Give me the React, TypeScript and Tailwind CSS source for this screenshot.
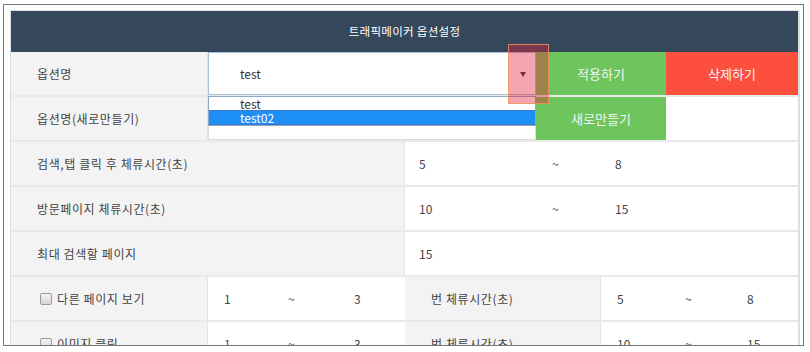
import { ReactNode } from 'react';

const FONT = { fontFamily: '"Noto Sans CJK KR", "Liberation Sans", sans-serif' };

// 범위 값 (5 ~ 8 같은)
const Range = ({ from, to, a, b }: { from: string; to: string; a: string; b: string }) => (
  <div className="flex items-center h-full text-[12px] text-[#444]">
    <span className={a}>{from}</span>
    <span className={b}>~</span>
    <span>{to}</span>
  </div>
);

const Row = ({ children }: { children: ReactNode }) => (
  <div className="flex h-[45px] border-b-2 border-[#e9e9e9] shrink-0">{children}</div>
);

const Label = ({ children, w }: { children: ReactNode; w: string }) => (
  <div className={`${w} h-full bg-[#f3f3f3] border-r border-[#e4e4e4] flex items-center pl-[26px] text-[12px] text-[#444] tracking-[0.6px]`}>
    {children}
  </div>
);

const CheckBox = () => (
  <span className="inline-block w-[12px] h-[12px] rounded-[2px] border border-[#9a9a9a] bg-gradient-to-b from-[#f4f4f4] to-[#d6d6d6] mr-[5px]" />
);

export default function App() {
  return (
    <div className="w-[810px] h-[352px] bg-white relative overflow-hidden" style={FONT}>
      <div className="ml-[3px] mt-[4px] w-[801px] h-[342px] border border-[#777] pl-[6px] pr-[3px] pt-[5px] overflow-hidden bg-white">
        <div className="border-l border-r-2 border-t border-[#dedede] bg-white">
          {/* 헤더 */}
          <div className="h-[41px] bg-[#35485b] flex items-center justify-center text-white text-[11.5px] tracking-[0.3px]">
            트래픽메이커 옵션설정
          </div>

          {/* 옵션명 */}
          <Row>
            <Label w="w-[197px]">옵션명</Label>
            <div className="w-[328px] h-full border border-[#a9bfd8] bg-white flex items-center justify-between pl-[31px] pr-[9px] text-[12px] text-[#333]">
              <span>test</span>
              <span className="text-[6px] text-[#333]">▼</span>
            </div>
            <button className="w-[130px] h-full bg-[#6ec55e] text-[#f4f4f4] text-[13px]">적용하기</button>
            <button className="w-[132px] h-full bg-[#fc4f3e] text-[#f4f4f4] text-[13px]">삭제하기</button>
          </Row>

          {/* 옵션명(새로만들기) */}
          <Row>
            <Label w="w-[197px]">옵션명(새로만들기)</Label>
            <div className="w-[328px] h-full border border-[#dcdcdc] bg-white relative">
              {/* 셀렉트 펼침 목록 */}
              <div className="absolute left-[-1px] right-[-1px] top-[-2px] h-[30px] border border-[#8ea7c4] bg-white text-[12px] leading-[12px]">
                <div className="pl-[31px] h-[13px] flex items-center text-[#333]">test</div>
                <div className="pl-[31px] h-[15px] flex items-center bg-[#1e8ff6] border-y border-[#3a76c9] text-white">test02</div>
              </div>
            </div>
            <button className="w-[130px] h-full bg-[#6ec55e] text-[#f4f4f4] text-[13px]">새로만들기</button>
            <div className="w-[132px] h-full bg-white" />
          </Row>

          <Row>
            <Label w="w-[394px]">검색,탭 클릭 후 체류시간(초)</Label>
            <div className="flex-1 pl-[14px]">
              <Range from="5" to="8" a="w-[133px]" b="w-[63px]" />
            </div>
          </Row>

          <Row>
            <Label w="w-[394px]">방문페이지 체류시간(초)</Label>
            <div className="flex-1 pl-[14px]">
              <Range from="10" to="15" a="w-[133px]" b="w-[63px]" />
            </div>
          </Row>

          <Row>
            <Label w="w-[394px]">최대 검색할 페이지</Label>
            <div className="flex-1 pl-[14px] flex items-center text-[12px] text-[#444]">15</div>
          </Row>

          <Row>
            <div className="w-[197px] h-full bg-[#f3f3f3] border-r border-[#e4e4e4] flex items-center pl-[29px] text-[12px] text-[#444] tracking-[0.6px]">
              <CheckBox />
              다른 페이지 보기
            </div>
            <div className="w-[197px] h-full pl-[16px]">
              <Range from="1" to="3" a="w-[64px]" b="w-[66px]" />
            </div>
            <Label w="w-[196px]">번 체류시간(초)</Label>
            <div className="flex-1 h-full pl-[16px]">
              <Range from="5" to="8" a="w-[68px]" b="w-[62px]" />
            </div>
          </Row>

          <Row>
            <div className="w-[197px] h-full bg-[#f3f3f3] border-r border-[#e4e4e4] flex items-center pl-[29px] text-[12px] text-[#444] tracking-[0.6px]">
              <CheckBox />
              이미지 클릭
            </div>
            <div className="w-[197px] h-full pl-[16px]">
              <Range from="1" to="3" a="w-[64px]" b="w-[66px]" />
            </div>
            <Label w="w-[196px]">번 체류시간(초)</Label>
            <div className="flex-1 h-full pl-[16px]">
              <Range from="10" to="15" a="w-[68px]" b="w-[62px]" />
            </div>
          </Row>
        </div>
      </div>

      {/* 강조 표시 박스 */}
      <div className="absolute left-[508px] top-[44px] w-[41px] h-[60px] bg-[rgba(230,30,55,0.4)] border border-[rgba(240,150,90,0.8)]" />
    </div>
  );
}
